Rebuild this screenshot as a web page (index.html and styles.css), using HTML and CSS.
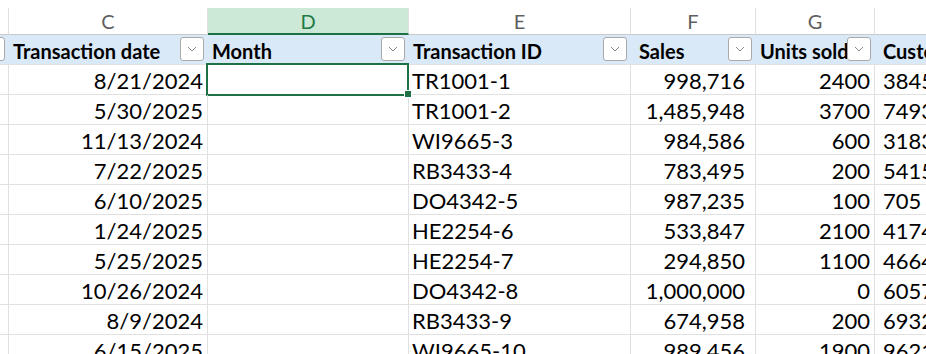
FILE: index.html
```html
<!DOCTYPE html>
<html lang="en">
<head>
    <meta charset="UTF-8">
    <meta name="viewport" content="width=device-width, initial-scale=1.0">
    <title>Transactions</title>
    <link rel="stylesheet" href="styles.css">
</head>
<body>
    <div class="sheet">
        <!-- column letters -->
        <div class="col-head"></div>
        <div class="col-head">C</div>
        <div class="col-head active">D</div>
        <div class="col-head">E</div>
        <div class="col-head">F</div>
        <div class="col-head">G</div>
        <div class="col-head"></div>

        <!-- table header -->
        <div class="th"><span class="filter"><svg viewBox="0 0 10 6"><path d="M1 1 L5 5 L9 1"/></svg></span></div>
        <div class="th">Transaction date<span class="filter"><svg viewBox="0 0 10 6"><path d="M1 1 L5 5 L9 1"/></svg></span></div>
        <div class="th">Month<span class="filter"><svg viewBox="0 0 10 6"><path d="M1 1 L5 5 L9 1"/></svg></span></div>
        <div class="th">Transaction ID<span class="filter"><svg viewBox="0 0 10 6"><path d="M1 1 L5 5 L9 1"/></svg></span></div>
        <div class="th th-pad">Sales<span class="filter"><svg viewBox="0 0 10 6"><path d="M1 1 L5 5 L9 1"/></svg></span></div>
        <div class="th">Units sold<span class="filter"><svg viewBox="0 0 10 6"><path d="M1 1 L5 5 L9 1"/></svg></span></div>
        <div class="th th-pad">Customer</div>

        <div class="td"></div><div class="td num">8/21/2024</div><div class="td selected"></div><div class="td">TR1001-1</div><div class="td num sales">998,716</div><div class="td num">2400</div><div class="td txt">3845 Pine St</div>
        <div class="td"></div><div class="td num">5/30/2025</div><div class="td"></div><div class="td">TR1001-2</div><div class="td num sales">1,485,948</div><div class="td num">3700</div><div class="td txt">7493 Elm Ave</div>
        <div class="td"></div><div class="td num">11/13/2024</div><div class="td"></div><div class="td">WI9665-3</div><div class="td num sales">984,586</div><div class="td num">600</div><div class="td txt">3183 Oak Rd</div>
        <div class="td"></div><div class="td num">7/22/2025</div><div class="td"></div><div class="td">RB3433-4</div><div class="td num sales">783,495</div><div class="td num">200</div><div class="td txt">5415 Lake Dr</div>
        <div class="td"></div><div class="td num">6/10/2025</div><div class="td"></div><div class="td">DO4342-5</div><div class="td num sales">987,235</div><div class="td num">100</div><div class="td txt">705 Cedar Ln</div>
        <div class="td"></div><div class="td num">1/24/2025</div><div class="td"></div><div class="td">HE2254-6</div><div class="td num sales">533,847</div><div class="td num">2100</div><div class="td txt">4174 Hill St</div>
        <div class="td"></div><div class="td num">5/25/2025</div><div class="td"></div><div class="td">HE2254-7</div><div class="td num sales">294,850</div><div class="td num">1100</div><div class="td txt">4664 Park Ave</div>
        <div class="td"></div><div class="td num">10/26/2024</div><div class="td"></div><div class="td">DO4342-8</div><div class="td num sales">1,000,000</div><div class="td num">0</div><div class="td txt">6057 River Rd</div>
        <div class="td"></div><div class="td num">8/9/2024</div><div class="td"></div><div class="td">RB3433-9</div><div class="td num sales">674,958</div><div class="td num">200</div><div class="td txt">6932 Bay St</div>
        <div class="td"></div><div class="td num">6/15/2025</div><div class="td"></div><div class="td">WI9665-10</div><div class="td num sales">989,456</div><div class="td num">1900</div><div class="td txt">9621 Main St</div>
    </div>
</body>
</html>
```

FILE: styles.css
```css
:root {
    --grid-line: #e1e1e1;
    --header-blue: #dae9f8;
    --excel-green: #1e7145;
    --active-col: #cbe9d6;
}

html, body {
    margin: 0;
    padding: 0;
    background: #fff;
    overflow: hidden;
    height: 354px;
    width: 926px;
}

body {
    font-family: 'Lato', 'Noto Sans', sans-serif;
    font-size: 22px;
    color: #000;
}

.sheet {
    display: grid;
    grid-template-columns: 9px 199px 201px 222px 125px 119px 220px;
    grid-template-rows: 27px repeat(12, 30px);
    padding-top: 8px;
}

.col-head {
    box-sizing: border-box;
    border-right: 1px solid var(--grid-line);
    border-bottom: 1px solid #c9c9c9;
    display: flex;
    align-items: center;
    justify-content: center;
    color: #5f5f5f;
    font-size: 20px;
    line-height: 24px;
}

.col-head.active {
    background: var(--active-col);
    color: #1d7a45;
    border-bottom: 2px solid var(--excel-green);
}

.th {
    position: relative;
    box-sizing: border-box;
    background: var(--header-blue);
    border-bottom: 1px solid var(--grid-line);
    font-size: 20px;
    font-weight: bold;
    padding: 0 4px;
    line-height: 24px;
    display: flex;
    align-items: flex-end;
    padding-bottom: 1px;
    white-space: nowrap;
    overflow: hidden;
}

.th-pad {
    padding-left: 8px;
}

.filter {
    position: absolute;
    right: 4px;
    top: 2px;
    width: 24px;
    height: 24px;
    box-sizing: border-box;
    background: #fff;
    border: 1px solid #a9a9a9;
    border-radius: 3px;
    display: flex;
    align-items: center;
    justify-content: center;
}

.filter svg {
    width: 10px;
    height: 6px;
    fill: none;
    stroke: #8c8c8c;
    stroke-width: 1;
}

.td {
    position: relative;
    box-sizing: border-box;
    border-right: 1px solid var(--grid-line);
    border-bottom: 1px solid var(--grid-line);
    padding: 0 3px 1px;
    line-height: 24px;
    display: flex;
    align-items: flex-end;
    white-space: nowrap;
}

.td.num {
    justify-content: flex-end;
    padding-right: 4px;
}

.td.sales {
    padding-right: 10px;
}

.td.txt {
    padding-left: 8px;
}

.td.selected::after {
    content: "";
    position: absolute;
    top: -2px;
    left: -2px;
    right: -1px;
    bottom: -2px;
    border: 2px solid var(--excel-green);
}

.td.selected::before {
    content: "";
    position: absolute;
    right: -4px;
    bottom: -4px;
    width: 6px;
    height: 6px;
    background: var(--excel-green);
    border: 1px solid #fff;
    z-index: 2;
}
```
